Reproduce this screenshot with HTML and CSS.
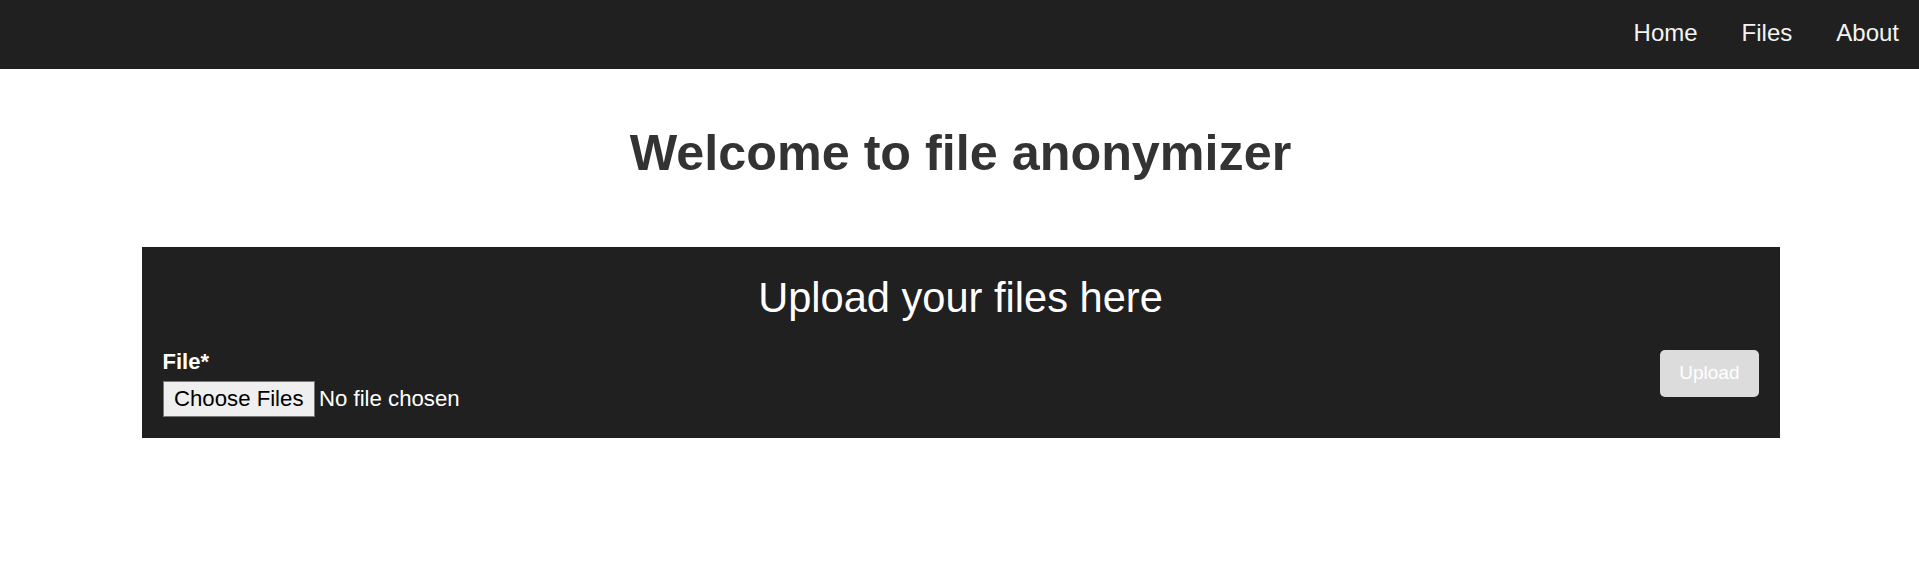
FILE: index.html
```html
<!DOCTYPE html>
<html lang="en">
<head>
<meta charset="utf-8">
<title>File anonymizer</title>
<link rel="stylesheet" href="styles.css">
</head>
<body>
<nav class="topnav">
  <a class="nav-link" href="#">Home</a>
  <a class="nav-link" href="#">Files</a>
  <a class="nav-link" href="#">About</a>
</nav>
<main class="page">
  <h1 class="page-title">Welcome to file anonymizer</h1>
  <section class="upload-panel">
    <h2 class="upload-title">Upload your files here</h2>
    <form class="upload-row">
      <div class="form-group">
        <label class="file-label" for="files">File*</label>
        <input class="file-input" id="files" type="file" multiple>
      </div>
      <button class="upload-btn" type="button" disabled>Upload</button>
    </form>
  </section>
</main>
</body>
</html>
```

FILE: styles.css
```css
* { box-sizing: border-box; }
html, body { margin: 0; padding: 0; background: #fff; }
body { font-family: "Liberation Sans", Arial, sans-serif; }

.topnav {
  height: 69px;
  background: #202020;
  display: flex;
  justify-content: flex-end;
  align-items: center;
  padding-bottom: 3px;
}
.nav-link {
  color: #f4f4f4;
  text-decoration: none;
  font-size: 24px;
  padding: 0 20px 0 24px;
}

.page {
  display: flex;
  flex-direction: column;
  align-items: center;
  padding-left: 2px;
}

.page-title {
  margin: 54px 0 65px;
  font-size: 50.3px;
  font-weight: bold;
  color: #333333;
  text-align: center;
}

.upload-panel {
  width: 1638px;
  background: #202020;
  padding: 0 21px 21px;
  color: #ffffff;
}
.upload-title {
  margin: 27px 0 27px;
  text-align: center;
  font-size: 41.6px;
  font-weight: normal;
  color: #ffffff;
}
.upload-row {
  display: flex;
  justify-content: space-between;
  align-items: flex-start;
}
.form-group {
  display: flex;
  flex-direction: column;
  gap: 6px;
}
.file-label {
  font-size: 22px;
  font-weight: bold;
  color: #ffffff;
}
.file-input {
  display: block;
  font-family: "Liberation Sans", Arial, sans-serif;
  font-size: 22.2px;
  color: #ffffff;
}
.file-input::file-selector-button {
  font-family: "Liberation Sans", Arial, sans-serif;
  font-size: 22.2px;
  color: #000000;
  background: #efefef;
  border: 1px solid #767676;
  border-radius: 0;
  padding: 4px 10.5px;
  margin-right: 4px;
}
.upload-btn {
  margin-top: 1px;
  font-family: "Liberation Sans", Arial, sans-serif;
  font-size: 19px;
  color: #ffffff;
  background: #dcdcdc;
  border: none;
  border-radius: 5px;
  padding: 12px 19px 13px;
}
```
